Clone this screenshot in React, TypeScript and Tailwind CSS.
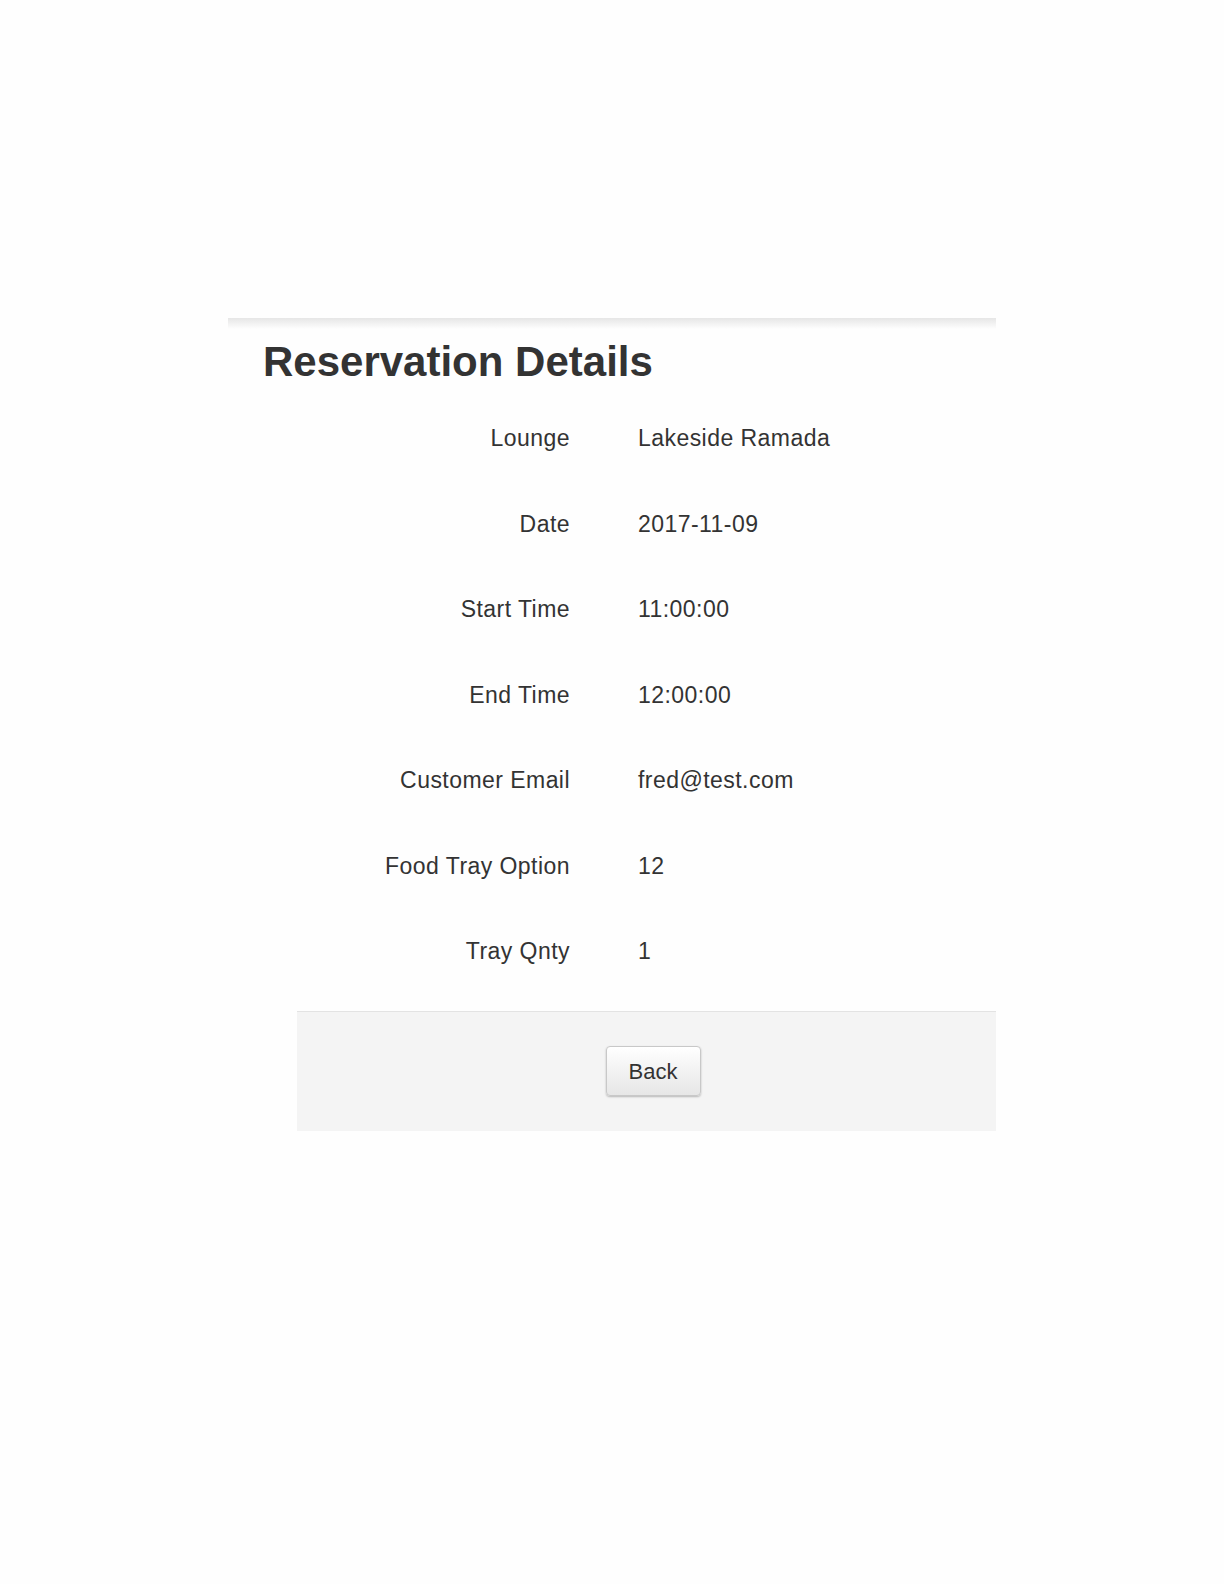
const rows: [string, string][] = [
  ["Lounge", "Lakeside Ramada"],
  ["Date", "2017-11-09"],
  ["Start Time", "11:00:00"],
  ["End Time", "12:00:00"],
  ["Customer Email", "fred@test.com"],
  ["Food Tray Option", "12"],
  ["Tray Qnty", "1"],
]

export default function App() {
  return (
    <div
      className="min-h-[1584px] w-full bg-[#fefefe] text-[#333333]"
      style={{ fontFamily: '"Liberation Sans", Arial, sans-serif' }}
    >
      <div className="mx-auto w-[768px] pt-[318px]">
        {/* top rule */}
        <div className="h-[11px] bg-gradient-to-b from-[#e6e6e6] to-[#fefefe]" />

        <h1 className="mt-[9px] pl-[35px] text-[42px] font-bold leading-[48px]">Reservation Details</h1>

        {/* details */}
        <div className="mt-[37px] flex flex-col">
          {rows.map(([label, value]) => (
            <div key={label} className="flex h-[85.5px] items-start text-[23px] leading-[30px] tracking-[0.45px]">
              <div className="w-[342px] text-right">{label}</div>
              <div className="ml-[68px]">{value}</div>
            </div>
          ))}
        </div>

        {/* footer */}
        <div className="ml-[69px] mt-[-11px] flex h-[120px] items-center justify-center border-t border-[#e3e3e3] bg-[#f4f4f4] pl-[13px]">
          <button className="h-[50px] w-[95px] rounded-[4px] border border-[#c8c8c8] bg-gradient-to-b from-white to-[#e6e6e6] text-[22px] text-[#333333] shadow-[0_1px_2px_rgba(0,0,0,0.25)]">
            Back
          </button>
        </div>
      </div>
    </div>
  )
}
